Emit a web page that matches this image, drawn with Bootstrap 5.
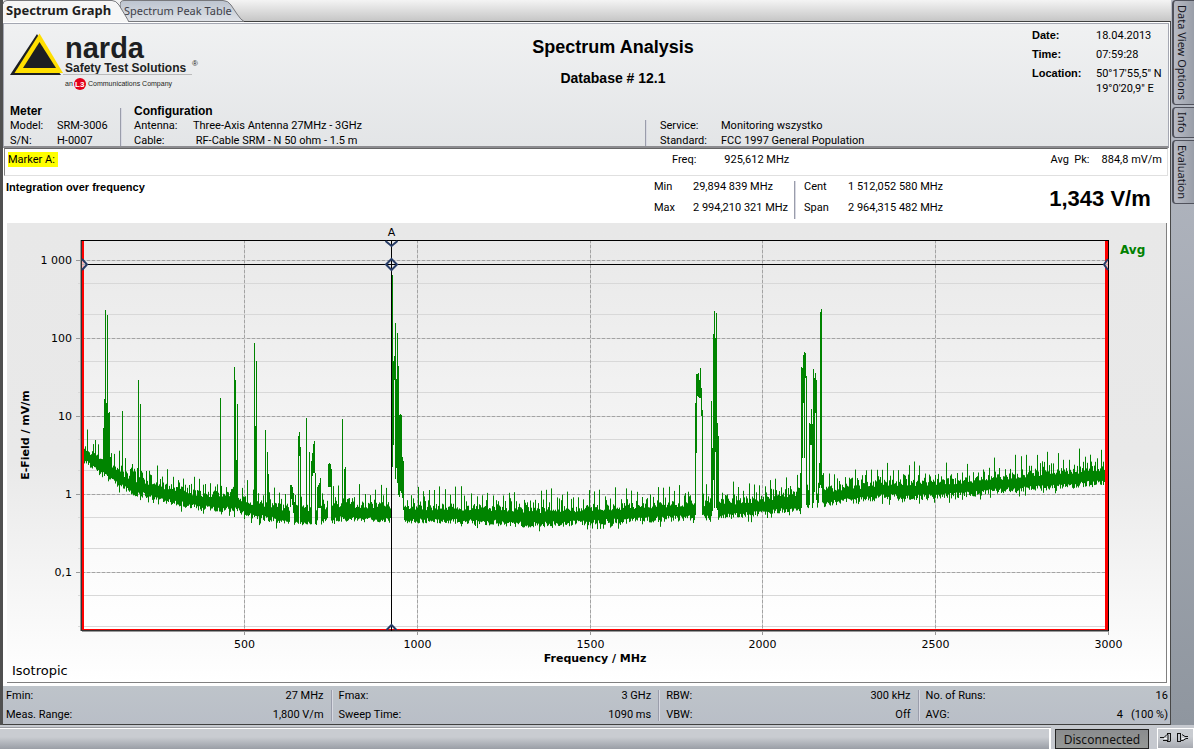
<!DOCTYPE html>
<html lang="en">
<head>
<meta charset="utf-8">
<meta name="viewport" content="width=device-width, initial-scale=1">
<title>Spectrum Analysis</title>
<link rel="stylesheet" href="https://cdn.jsdelivr.net/npm/bootstrap@5.3.0/dist/css/bootstrap.min.css">
<style>
  body { font: 11px/15px Roboto, "Liberation Sans", sans-serif; color: #000; background: #c6c9cf; }
  b, h1, h2, h3 { font-family: "Liberation Sans", Arial, sans-serif; }
  .frame { border-left: 3px solid #505050; background: #fff; min-width: 0; }
  .tab-strip { height: 22px; background: linear-gradient(#f4f4f4, #c6c6c6); border-bottom: 1px solid #404040; }
  .doc-tab { height: 22px; border: 0; background: none; padding: 0; }
  .doc-tab svg { left: 0; top: 0; z-index: 0; }
  .doc-tab span { position: relative; z-index: 1; }
  .tab-on { width: 126px; padding-left: 3px; padding-bottom: 2px; font: bold 13px/17px "Noto Sans", sans-serif; color: #1e1e1e; z-index: 2; }
  .tab-off { width: 124px; margin-left: -9px; padding-left: 4px; padding-bottom: 2px; font: 11px/17px "Noto Sans", sans-serif; color: #404048; }
  .paper { border-right: 1px solid #484848; }
  .report-head { height: 125px; margin: 1px 1px 0 0; border: 1px solid #a4a7b2; border-bottom: 2px solid #8c8c90; background: linear-gradient(#f0f1f2, #e3e5e7); }
  .brand { flex: 0 0 190px; }
  .report-head h1 { font-size: 18px; line-height: 22px; font-weight: bold; margin: 12px 0 11px; }
  .report-head h2 { font-size: 14px; line-height: 18px; font-weight: bold; margin: 0; }
  .stamp { flex: 0 0 136px; display: grid; grid-template-columns: 64px 1fr; row-gap: 4px; align-content: start; margin: 0; padding-top: 4px; }
  dl.pairs { display: grid; margin: 0; }
  dt { font-weight: normal; }
  dd { margin: 0; white-space: pre; }
  .stamp dt { font: bold 11px/15px "Liberation Sans", sans-serif; }
  .specs { height: 42px; }
  .specs h3 { font-size: 12px; line-height: 14px; font-weight: bold; margin: 0; }
  .meter { flex: 0 0 116px; padding-left: 6px; }
  .meter dl { grid-template-columns: 47px 1fr; }
  .config { padding-left: 12px; }
  .config dl { grid-template-columns: 59px 1fr; }
  .service { flex: 0 0 521px; padding: 14px 0 0 13px; }
  .service dl { grid-template-columns: 61px 1fr; }
  .rule { width: 2px; background: linear-gradient(90deg, #9a9dab 50%, #d8d9e2 50%); }
  .marker-row { height: 28px; margin: 0 2px 0 1px; border: 1px solid #e0e0e0; border-top-color: #666; border-left-color: #808080; padding: 3px 5px 0 3px; }
  .tag { background: #ff0; height: 15px; width: 50px; line-height: 16px; white-space: nowrap; }
  .marker-data { flex: 0 0 490px; }
  .integ-row { height: 47px; padding: 1px 2px 0 3px; line-height: 20px; }
  .integ-row h3 { font: bold 11px/21px "Liberation Sans", sans-serif; margin: 0; }
  .integ-data { flex: 0 0 514px; }
  .range { grid-template-columns: 39px 95px; width: 140px; align-content: start; row-gap: 1px; }
  .span-range { grid-template-columns: 44px 1fr; padding-left: 8px; align-content: start; row-gap: 1px; }
  .total { font: bold 22px/28px "Liberation Sans", sans-serif; width: 136px; padding-top: 8px; }
  .chart-box { margin: 0 3px 0 4px; border: solid #808080; border-width: 0 1px 1px 0; background: linear-gradient(#e8e8e8, #e9e9e9 52%, #fff); height: 460px; }
  .chart-box svg { font: 11px "DejaVu Sans", sans-serif; }
  .status { margin-top: 3px; padding: 0 2px 0 3px; height: 39px; background: linear-gradient(#bec4ca, #b9bec7); border-bottom: 1px solid #404040; display: grid; grid-template-columns: 326fr 327fr 259fr 248fr; line-height: 19px; }
  .status dl { grid-template-columns: auto 1fr; }
  .status dd { text-align: right; }
  .status .cell { display: flex; gap: 7px; min-width: 0; }
  .status .cell + .cell { padding-left: 6px; }
  .status .rule { margin: 4px 0 3px; flex: none; }
  .side { flex: 0 0 23px; gap: 2px; background: linear-gradient(#b9bdc7, #8f969f); }
  .side button { writing-mode: vertical-rl; width: 22px; margin-left: 1px; padding: 4px 4px 4px 0; border: solid #50525c; border-width: 1px 0 1px 2px; border-radius: 4px 0 0 4px; background: linear-gradient(90deg, #b8bbc5, #999ea8); font: 11px/16px "Noto Sans", sans-serif; text-align: left; color: #16161e; }
  .foot { height: 24px; padding-top: 3px; }
  .foot-well { border: solid #fff; border-width: 1px 2px 0 0; box-shadow: 0 -1px #9a9ca2; background: linear-gradient(#c9ccd1 40%, #9a9ea6); }
  .link-state { width: 94px; margin: 1px 8px 0 4px; padding: 0; border: 1px solid #222; background: linear-gradient(#8a8c8e, #969896); font: 12px/20px "Noto Sans", sans-serif; color: #111; }
  .plugs { flex: 0 0 37px; border: 1px solid #fff; background: linear-gradient(#c9ccd1 40%, #a6a9b0); }
</style>
</head>
<body class="d-flex flex-column min-vh-100">
<div class="d-flex flex-grow-1">
  <main class="frame flex-grow-1 d-flex flex-column">
    <nav class="tab-strip d-flex">
      <button class="doc-tab tab-on position-relative text-start text-nowrap"><svg class="position-absolute" width="126" height="22"><path d="M0 22V4Q0 .5 4 .5H109Q113 .5 116 5L122 15Q125 21 126 22Z" fill="#f6f6f6"/><path d="M0 4Q0 .5 4 .5H109Q113 .5 116 5L122 15Q125 20 126 22" fill="none" stroke="#77787c"/></svg><span>Spectrum Graph</span></button>
      <button class="doc-tab tab-off position-relative text-start text-nowrap"><svg class="position-absolute" width="124" height="22"><defs><linearGradient id="g1" x1="0" y1="0" x2="0" y2="1"><stop stop-color="#bcc4cf"/><stop offset="1" stop-color="#dfe2e7"/></linearGradient></defs><path d="M0 5Q0 .5 4 .5H103Q108 .5 111 5L117 14Q121 20 124 21.5H8Q5 19 1 11Z" fill="url(#g1)" stroke="#77787c"/></svg><span>Spectrum Peak Table</span></button>
    </nav>
    <div class="paper flex-grow-1 d-flex flex-column">
      <header class="report-head d-flex flex-column">
        <div class="d-flex flex-grow-1">
          <div class="brand">
            <svg width="190" height="70" overflow="visible" font-family="Liberation Sans, sans-serif" fill="#1d1f22" role="img" aria-label="narda Safety Test Solutions">
              <path d="M33 10 6 51H57L54 47Z"/><path d="M35.500 9.500 10.500 49H59Z" fill="#ffdf00"/><path d="M35.500 18 19 44H52Z"/>
              <text x="61" y="34" font-size="29" font-weight="bold">narda</text>
              <text x="61" y="48" font-size="12" font-weight="bold">Safety Test Solutions</text>
              <path d="M59 50.500H188" stroke="#bbb"/>
              <text x="188" y="42" font-size="8">®</text>
              <text x="61" y="62" font-size="7">an</text>
              <circle cx="76" cy="60" r="6" fill="#e3001b"/><text x="71" y="63" font-size="8" font-weight="bold" fill="#fff">L3</text>
              <text x="84" y="62" font-size="7">Communications Company</text>
            </svg>
          </div>
          <div class="flex-grow-1 text-center"><h1>Spectrum Analysis</h1><h2>Database # 12.1</h2></div>
          <dl class="stamp"><dt>Date:</dt><dd>18.04.2013</dd><dt>Time:</dt><dd>07:59:28</dd><dt>Location:</dt><dd>50°17'55,5" N
19°0'20,9" E</dd></dl>
        </div>
        <div class="specs d-flex">
          <section class="meter"><h3>Meter</h3><dl class="pairs"><dt>Model:</dt><dd>SRM-3006</dd><dt>S/N:</dt><dd>H-0007</dd></dl></section>
          <div class="rule mt-1"></div>
          <section class="config flex-grow-1"><h3>Configuration</h3><dl class="pairs"><dt>Antenna:</dt><dd>Three-Axis Antenna 27MHz - 3GHz</dd><dt>Cable:</dt><dd> RF-Cable SRM - N 50 ohm - 1.5 m</dd></dl></section>
          <div class="rule mt-3"></div>
          <section class="service"><dl class="pairs"><dt>Service:</dt><dd>Monitoring wszystko</dd><dt>Standard:</dt><dd>FCC 1997 General Population</dd></dl></section>
        </div>
      </header>
      <section class="marker-row d-flex justify-content-between">
        <div class="tag">Marker A:</div>
        <div class="marker-data d-flex"><span>Freq:</span><span class="ps-4 ms-1 flex-grow-1">925,612 MHz</span><span class="me-2">Avg&nbsp; Pk:</span><span class="ms-1">884,8 mV/m</span></div>
      </section>
      <section class="integ-row d-flex justify-content-between">
        <h3>Integration over frequency</h3>
        <div class="integ-data d-flex">
          <dl class="pairs range"><dt>Min</dt><dd>29,894 839 MHz</dd><dt>Max</dt><dd>2 994,210 321 MHz</dd></dl>
          <div class="rule my-1"></div>
          <dl class="pairs span-range flex-grow-1"><dt>Cent</dt><dd>1 512,052 580 MHz</dd><dt>Span</dt><dd>2 964,315 482 MHz</dd></dl>
          <div class="total text-center">1,343 V/m</div>
        </div>
      </section>
      <figure class="chart-box" id="chart"></figure>
      <section class="status">
        <div class="cell"><dl class="pairs flex-grow-1"><dt>Fmin:</dt><dd>27 MHz</dd><dt>Meas. Range:</dt><dd>1,800 V/m</dd></dl><div class="rule"></div></div>
        <div class="cell"><dl class="pairs flex-grow-1"><dt>Fmax:</dt><dd>3 GHz</dd><dt>Sweep Time:</dt><dd>1090 ms</dd></dl><div class="rule"></div></div>
        <div class="cell"><dl class="pairs flex-grow-1"><dt>RBW:</dt><dd>300 kHz</dd><dt>VBW:</dt><dd>Off</dd></dl><div class="rule"></div></div>
        <div class="cell"><dl class="pairs flex-grow-1"><dt>No. of Runs:</dt><dd>16</dd><dt>AVG:</dt><dd>4   (100 %)</dd></dl></div>
      </section>
    </div>
  </main>
  <aside class="side d-flex flex-column">
    <button>Data View Options</button><button>Info</button><button>Evaluation</button>
  </aside>
</div>
<footer class="foot d-flex">
  <div class="foot-well flex-grow-1"></div>
  <button class="link-state">Disconnected</button>
  <div class="plugs">
    <svg width="32" height="18" fill="none" stroke="#111"><path d="M2 8.500H6M6 8.500 9 5.500H10V11.500H5M12.500 4V12.500M9 4.500H12M9 12.500H12"/><path d="M19.500 4V12.500M19 4.500H23M19 12.500H23M22.500 5V11.500H25L28 9.500H30M24 5.500 27 7.500H30"/><path d="M6 9.500H9M24 9.500H26" stroke="#fff"/></svg>
  </div>
</footer>
<script>
// Vertical scale of the plot: 78 px per decade, 1000 mV/m at y = 37
const TOP = 17, BOTTOM = 407, DECADE = 78, LEFT = 75, RIGHT = 58, COLS = 1026;
// Noise floor: [column, centre y]
const floor = [[0,230],[8,236],[18,243],[30,251],[43,259],[52,263],[85,271],[118,278],[153,280],[168,286],[208,293],[238,292],[258,289],[308,290],[330,291],[400,292],[448,295],[480,294],[540,291],[580,289],[612,288],[653,286],[690,282],[720,278],[750,273],[778,270],[800,267],[850,267],[890,264],[940,259],[980,256],[1026,252]];
// Signals: column -> [top, bottom]; a missing bottom runs down to the noise
const signals = {21:[205],22:[176],23:[87],24:[180],25:[92],26:[190],27:[189],28:[234],13:[217],40:[188],50:[241],56:[157],58:[181],55:[245],64:[248],
138:[175],152:[144],153:[157],154:[237],155:[181],172:[120],173:[203],174:[138],183:[207],185:[229],186:[251],
208:[262,284],209:[262,276],210:[264,282],211:[270,290],216:[213],217:[209,233],218:[224],224:[195],227:[229],229:[238],230:[230,253],231:[221,250],232:[218,250],233:[250],236:[262,285],237:[260,285],238:[255,285],
246:[241,264],247:[240,264],248:[241,264],249:[246],260:[196],262:[246],263:[244],
309:[42,244],310:[52,244],311:[138,222],312:[133,157],313:[100,256],314:[156,245],315:[110,260],316:[143,272],317:[192,274],318:[191,268],319:[192,270],320:[234,275],321:[238,287],
613:[180,292],614:[151,230],615:[151,173],616:[150,174],617:[157,175],618:[145,175],619:[165,193],620:[187,292],
629:[178],630:[225,288],631:[111,257],632:[88,285],633:[115,229],634:[90,285],635:[200,287],636:[213],
718:[250],719:[144,285],720:[145,235],721:[132,180],722:[129,235],723:[130,155],724:[153,282],
727:[200,282],728:[201,222],729:[186,222],730:[201,285],731:[146,280],732:[155,269],733:[150,190],734:[157,277],737:[240,265],738:[89,262],739:[86,265],740:[252]};
function rng(seed) { return () => (seed = (seed * 1664525 + 1013904223) >>> 0) / 4294967296; }
function floorAt(c) {
  let k = 1; while (floor[k][0] < c) k++;
  const [a, ya] = floor[k - 1], [b, yb] = floor[k];
  return ya + (yb - ya) * (c - a) / (b - a);
}
function trace(step) {
  const r = rng(17); let d = "";
  for (let c = 2; c < COLS - 2; c++) {
    const y = floorAt(c), comb = c % 16 === 0 || c % 16 === 5 || c % 16 === 11;
    let t = y - 4 - r() * 7, b = y + 4 + r() * 6;
    const h = r(), low = r();
    if (comb) t = y - 13 - h * 16; else if (h > .82) t -= 4 + 6 * r();
    if (low > .9) b += 5;
    if (signals[c]) { t = signals[c][0]; b = signals[c][1] || b; }
    d += `M${(LEFT + (c + .5) * step).toFixed(2)} ${t.toFixed(1)}V${b.toFixed(1)}`;
  }
  return d;
}
function draw() {
  const box = document.getElementById("chart"), W = box.clientWidth, R = W - RIGHT, pw = R - LEFT, step = pw / COLS;
  let s = `<svg class="d-block" width="${W}" height="459" role="img" aria-label="Spectrum graph"><defs><linearGradient id="pg" x1="0" y1="0" x2="0" y2="1"><stop stop-color="#e9e9e9"/><stop offset=".5" stop-color="#f4f4f4"/><stop offset="1" stop-color="#fff"/></linearGradient></defs><rect x="${LEFT}" y="${TOP}" width="${pw}" height="390" fill="url(#pg)"/>`;
  for (let k = 0; k < 5; k++) {
    const y = 37.5 + k * DECADE;
    [23, 54].forEach(o => s += `<path d="M71 ${y + o}H${R + 1}" stroke="#d8d8d8"/>`);
    s += `<path d="M69 ${y}H${R + 1}" stroke="#cfcfcf"/><path d="M69 ${y}H75" stroke="#999"/><path d="M75 ${y}H${R}" stroke="#a3a3a3" stroke-dasharray="3 2"/><text x="65" y="${y + 3.5}" text-anchor="end">${["1 000", "100", "10", "1", "0,1"][k]}</text>`;
  }
  for (let f = 500; f <= 3000; f += 500) {
    const x = Math.round(R - (3000 - f) * pw / 2969) + .5;
    s += `<path d="M${x} ${TOP}V412" stroke="#cfcfcf"/><path d="M${x} 408V412" stroke="#999"/><path d="M${x} ${TOP}V407" stroke="#a3a3a3" stroke-dasharray="3 2"/><text x="${x}" y="425" text-anchor="middle">${f}</text>`;
  }
  const mx = Math.round(LEFT + 309 * step) + .5;
  s += `<path d="${trace(step)}" stroke="#008400" stroke-width="${step}"/>
  <path d="M${LEFT - 1} 406.500H${R}" stroke="#f00"/><path d="M${LEFT - 1} 407.500H${R + 1}" stroke="#333"/><path d="M${LEFT} 408.500H${R + 1}" stroke="#999"/>
  <path d="M${LEFT - 1.5} ${TOP}V408" stroke="#999"/><path d="M${LEFT - .5} ${TOP}V408" stroke="#333"/><path d="M${LEFT + 1} ${TOP + 1}V406" stroke="#f00" stroke-width="2"/><path d="M${R - 1.5} ${TOP + 1}V407" stroke="#f00" stroke-width="3"/><path d="M${R + .5} ${TOP}V408M${LEFT - 1} 17.500H${R + 1}M${LEFT} 41.500H${R}M${mx} 17V408" stroke="#000"/>
  <g fill="none" stroke="#273c66" stroke-width="2"><path fill="#fff" fill-opacity=".7" d="M${LEFT} 36L${LEFT + 5} 41.500L${LEFT} 47M${R} 36L${R - 4} 41.500L${R} 47"/><path d="M${mx} 36L${mx + 5.5} 41.500L${mx} 47L${mx - 5.5} 41.500ZM${mx - 6} 18L${mx} 23L${mx + 6} 18M${mx - 5} 407L${mx} 402L${mx + 5} 407"/></g>
  <text x="${mx}" y="13" text-anchor="middle">A</text>
  <text x="${LEFT + pw / 2}" y="439" text-anchor="middle" font-weight="bold">Frequency / MHz</text>
  <text transform="translate(22 212) rotate(-90)" text-anchor="middle" font-weight="bold">E-Field / mV/m</text>
  <text x="${R + 12}" y="31" font-weight="bold" font-size="12" fill="#008000">Avg</text>
  <text x="5" y="452" font-size="13">Isotropic</text></svg>`;
  box.innerHTML = s;
}
draw();
addEventListener("resize", draw);
</script>
<script src="https://cdn.jsdelivr.net/npm/bootstrap@5.3.0/dist/js/bootstrap.bundle.min.js"></script>
</body>
</html>
